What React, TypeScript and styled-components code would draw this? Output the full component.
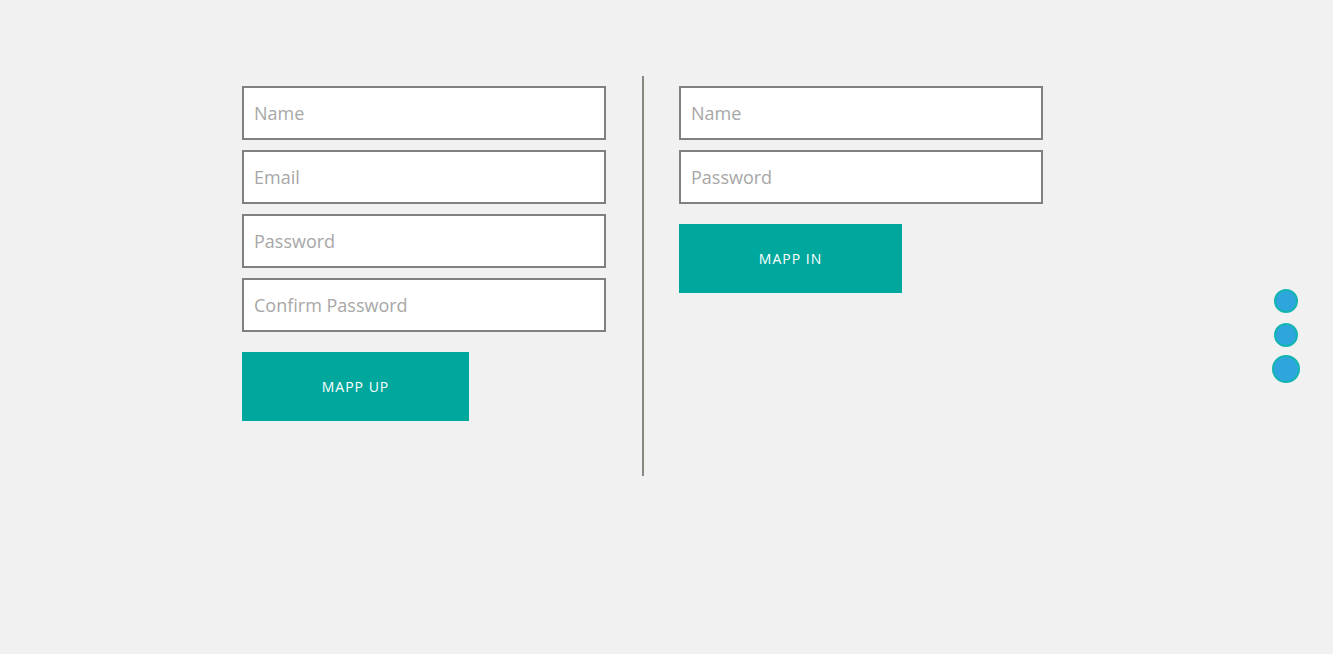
import styled, { createGlobalStyle } from "styled-components";

const GlobalStyle = createGlobalStyle`
  html, body {
    margin: 0;
    padding: 0;
    background: #f1f1f1;
    font-family: "Open Sans", "Liberation Sans", sans-serif;
  }
`;

export default function App() {
    return (
        <>
            <GlobalStyle />
            <Page>
                <Forms>
                    <Column>
                        <Field placeholder="Name" />
                        <Field placeholder="Email" />
                        <Field placeholder="Password" type="password" />
                        <Field placeholder="Confirm Password" type="password" />
                        <Button $width={227}>MAPP UP</Button>
                    </Column>
                    <Divider />
                    <Column>
                        <Field placeholder="Name" />
                        <Field placeholder="Password" type="password" />
                        <Button $width={223}>MAPP IN</Button>
                    </Column>
                </Forms>
            </Page>
            <Dots>
                <DotSlot><Dot /></DotSlot>
                <DotSlot><Dot /></DotSlot>
                <DotSlot><Dot $big /></DotSlot>
            </Dots>
        </>
    );
}

const Page = styled.div`
  min-height: 654px;
  padding: 76px 0 0 242px;
  box-sizing: border-box;
`;

const Forms = styled.div`
  display: flex;
  height: 400px;
`;

const Column = styled.div`
  width: 364px;
  padding-top: 10px;
  display: flex;
  flex-direction: column;
  align-items: flex-start;
`;

const Field = styled.input`
  width: 364px;
  height: 54px;
  box-sizing: border-box;
  margin-bottom: 10px;
  border: 2px solid #808080;
  background: #fff;
  padding: 0 10px;
  font-family: "Open Sans", "Liberation Sans", sans-serif;
  font-size: 18px;
  color: #444;
  outline: none;
  &::placeholder {
    color: #a7a7a7;
  }
`;

const Button = styled.button<{ $width: number }>`
  margin-top: 10px;
  width: ${(p) => p.$width}px;
  height: 69px;
  border: none;
  background: #00a79d;
  color: #fff;
  font-family: "Open Sans", "Liberation Sans", sans-serif;
  font-size: 14px;
  font-weight: 400;
  letter-spacing: 1px;
  cursor: pointer;
`;

const Divider = styled.div`
  width: 2px;
  background: #8a8680;
  margin: 0 35px 0 36px;
`;

const Dots = styled.div`
  position: fixed;
  right: 30px;
  top: 284px;
  width: 34px;
  display: flex;
  flex-direction: column;
`;

const DotSlot = styled.div`
  height: 34px;
  display: flex;
  align-items: center;
  justify-content: center;
`;

const Dot = styled.div<{ $big?: boolean }>`
  box-sizing: border-box;
  width: ${(p) => (p.$big ? 28 : 24)}px;
  height: ${(p) => (p.$big ? 28 : 24)}px;
  border-radius: 50%;
  background: #2ea6dd;
  border: 2px solid #13b5b1;
`;
